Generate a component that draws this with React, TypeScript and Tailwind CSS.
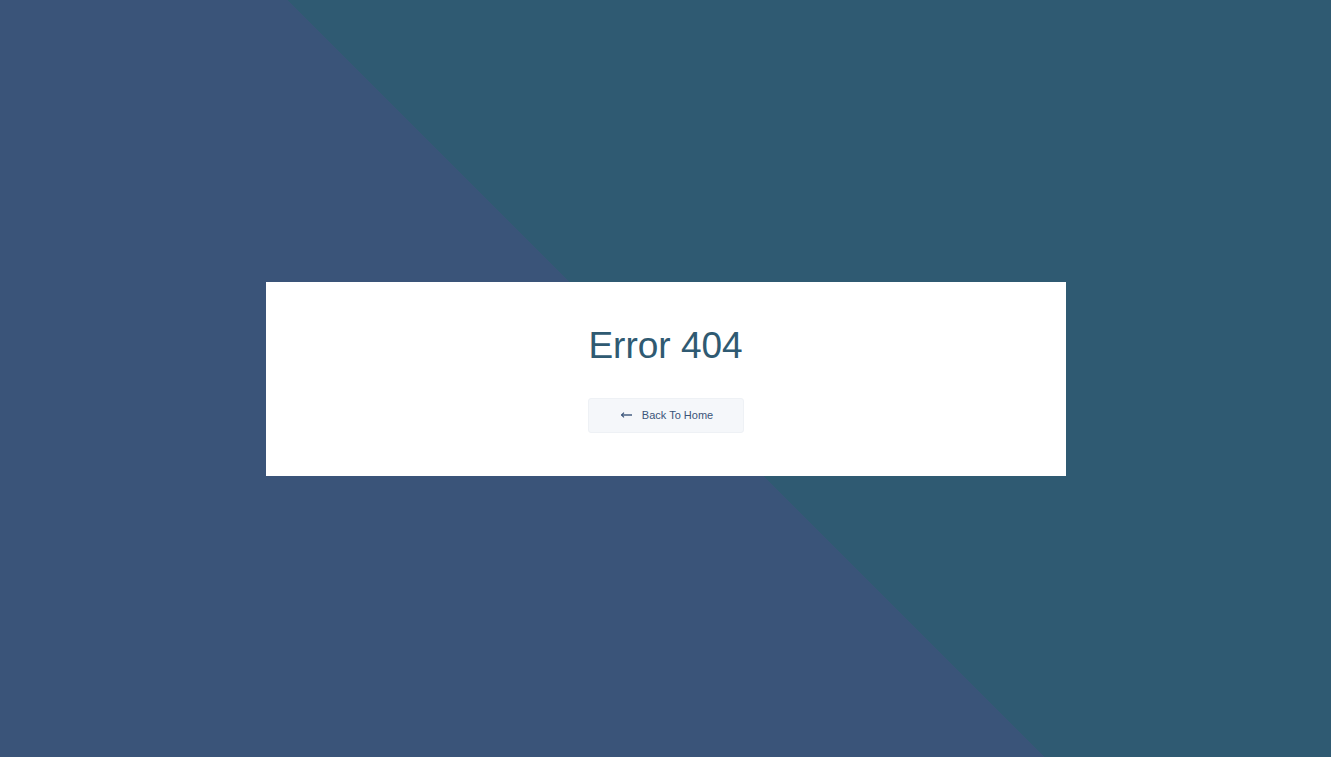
import React from "react";

export default function App() {
  return (
    <div
      className="w-full h-screen flex items-center justify-center bg-[linear-gradient(45deg,#3a5479_50%,#2f5a72_50%)]"
      style={{ fontFamily: '"Liberation Sans", Arial, sans-serif' }}
    >
      <div className="w-[800px] bg-white pt-[45px] pb-[43px] flex flex-col items-center">
        <h1 className="text-[37px] leading-none text-[#2f5a72] font-normal">Error 404</h1>
        <a
          href="#"
          className="mt-[34px] w-[156px] h-[35px] flex items-center justify-center gap-[10px] pl-[3px] bg-[#f5f7fa] border border-[#eef1f5] rounded-[3px] text-[11px] text-[#3a5479]"
        >
          <svg width="11" height="6" viewBox="0 0 11 6" fill="none">
            <path d="M0.5 3H11" stroke="#3a5479" strokeWidth="1.4" />
            <path d="M3 0.6L0.6 3L3 5.4" stroke="#3a5479" strokeWidth="1.1" fill="none" />
          </svg>
          <span>Back To Home</span>
        </a>
      </div>
    </div>
  );
}
